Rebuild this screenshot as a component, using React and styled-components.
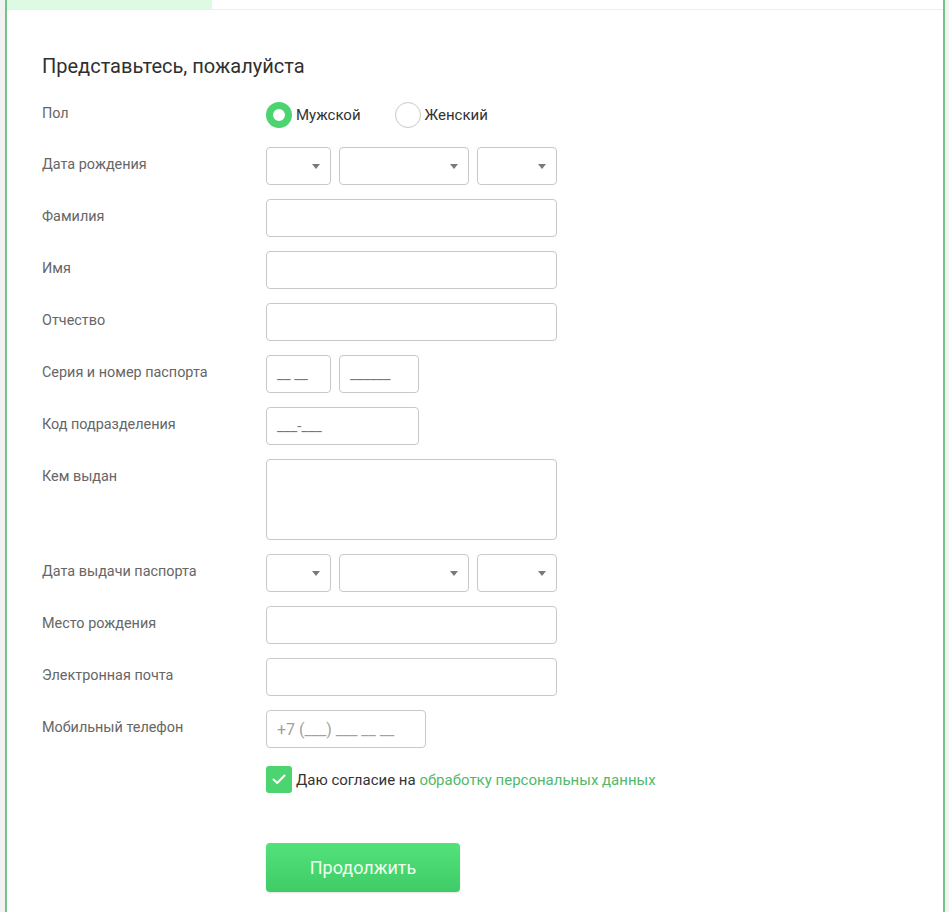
import React from 'react';
import styled, { createGlobalStyle } from 'styled-components';

const GlobalStyle = createGlobalStyle`
  html, body {
    margin: 0;
    padding: 0;
    background: #f1f2f1;
    font-family: Roboto, 'Liberation Sans', sans-serif;
  }
`;

const green = '#4cd470';

const Frame = styled.div`
  margin: 0 4px 0 5px;
  min-height: 912px;
  background: #fff;
  border-left: 2px solid #72c486;
  border-right: 2px solid #72c486;
  box-sizing: border-box;
`;

const Tabs = styled.div`
  display: flex;
  height: 9px;
  border-bottom: 1px solid #e4f3ea;
`;

const Tab = styled.div`
  width: ${(p) => p.width}px;
  background: ${(p) => (p.active ? '#ddfbe3' : '#fff')};
`;

const Form = styled.form`
  padding: 44px 35px 0;
`;

const Title = styled.h2`
  margin: 0 0 17px;
  font-size: 20px;
  line-height: 24px;
  font-weight: 400;
  color: #2f3030;
`;

const Grid = styled.div`
  display: grid;
  grid-template-columns: 224px 1fr;
  row-gap: 14px;
`;

const Label = styled.div`
  padding-top: ${(p) => p.top ?? 9}px;
  font-size: 14.4px;
  line-height: 18px;
  color: #666;
`;

const Field = styled.div`
  display: flex;
  gap: 8px;
  align-items: center;
  min-height: 38px;
`;

const Box = styled.div`
  position: relative;
  box-sizing: border-box;
  width: ${(p) => p.w}px;
  height: ${(p) => p.h || 38}px;
  border: 1px solid #c9c9c9;
  border-radius: 4px;
  background: #fff;
  display: flex;
  align-items: center;
  padding: 0 10px;
  font-size: ${(p) => (p.faint ? 16 : 15)}px;
  color: ${(p) => (p.faint ? '#a0a0a0' : '#777')};
`;

const Arrow = styled.span`
  position: absolute;
  right: 10px;
  top: 16px;
  width: 0;
  height: 0;
  border-left: 4px solid transparent;
  border-right: 4px solid transparent;
  border-top: 5px solid #7a7a7a;
`;

const RadioGroup = styled.div`
  box-sizing: border-box;
  display: flex;
  align-items: center;
  height: 38px;
  padding-top: 2px;
  gap: 34px;
`;

const RadioItem = styled.label`
  display: flex;
  align-items: center;
  gap: 4px;
  font-size: 15px;
  color: #333;
`;

const RadioDot = styled.span`
  box-sizing: border-box;
  width: 26px;
  height: 26px;
  border-radius: 50%;
  border: ${(p) => (p.checked ? `7px solid ${green}` : '1px solid #c9c9c9')};
  background: #fff;
`;

const ConsentRow = styled.div`
  grid-column: 2;
  display: flex;
  align-items: center;
  gap: 4px;
  margin-top: 4px;
  font-size: 15px;
  color: #333;
`;

const Check = styled.span`
  width: 26px;
  height: 27px;
  border-radius: 3px;
  background: ${green};
  display: flex;
  align-items: center;
  justify-content: center;
`;

const Link = styled.a`
  color: #52b86a;
  text-decoration: none;
`;

const Submit = styled.button`
  grid-column: 2;
  margin-top: 36px;
  width: 194px;
  height: 49px;
  border: none;
  border-radius: 4px;
  background: linear-gradient(#52e27a, #3fcb66);
  color: #effff2;
  font-family: Roboto, 'Liberation Sans', sans-serif;
  font-size: 18px;
  box-shadow: 0 1px 2px rgba(0, 0, 0, 0.12);
`;

const Select = ({ w }) => (
  <Box w={w}>
    <Arrow />
  </Box>
);

const DateSelects = () => (
  <Field>
    <Select w={65} />
    <Select w={130} />
    <Select w={80} />
  </Field>
);

export default function App() {
  return (
    <>
      <GlobalStyle />
      <Frame>
        <Tabs>
          <Tab width={205} active />
          <Tab width={300} />
        </Tabs>
        <Form>
          <Title>Представьтесь, пожалуйста</Title>
          <Grid>
            <Label top={10}>Пол</Label>
            <RadioGroup>
              <RadioItem>
                <RadioDot checked />
                Мужской
              </RadioItem>
              <RadioItem>
                <RadioDot />
                Женский
              </RadioItem>
            </RadioGroup>

            <Label>Дата рождения</Label>
            <DateSelects />

            <Label>Фамилия</Label>
            <Field><Box w={291} /></Field>

            <Label>Имя</Label>
            <Field><Box w={291} /></Field>

            <Label>Отчество</Label>
            <Field><Box w={291} /></Field>

            <Label>Серия и номер паспорта</Label>
            <Field>
              <Box w={65}>__ __</Box>
              <Box w={80}>______</Box>
            </Field>

            <Label>Код подразделения</Label>
            <Field><Box w={153}>___-___</Box></Field>

            <Label>Кем выдан</Label>
            <Field><Box w={291} h={81} /></Field>

            <Label>Дата выдачи паспорта</Label>
            <DateSelects />

            <Label>Место рождения</Label>
            <Field><Box w={291} /></Field>

            <Label>Электронная почта</Label>
            <Field><Box w={291} /></Field>

            <Label>Мобильный телефон</Label>
            <Field><Box w={160} faint>+7 (___) ___ __ __</Box></Field>

            <ConsentRow>
              <Check>
                <svg width="14" height="11" viewBox="0 0 14 11" fill="none">
                  <path d="M1.5 5.5 L5.2 9 L12.5 1.5" stroke="#fff" strokeWidth="2" strokeLinecap="round" strokeLinejoin="round" />
                </svg>
              </Check>
              <span>
                Даю согласие на <Link href="#">обработку персональных данных</Link>
              </span>
            </ConsentRow>

            <Submit type="button">Продолжить</Submit>
          </Grid>
        </Form>
      </Frame>
    </>
  );
}
